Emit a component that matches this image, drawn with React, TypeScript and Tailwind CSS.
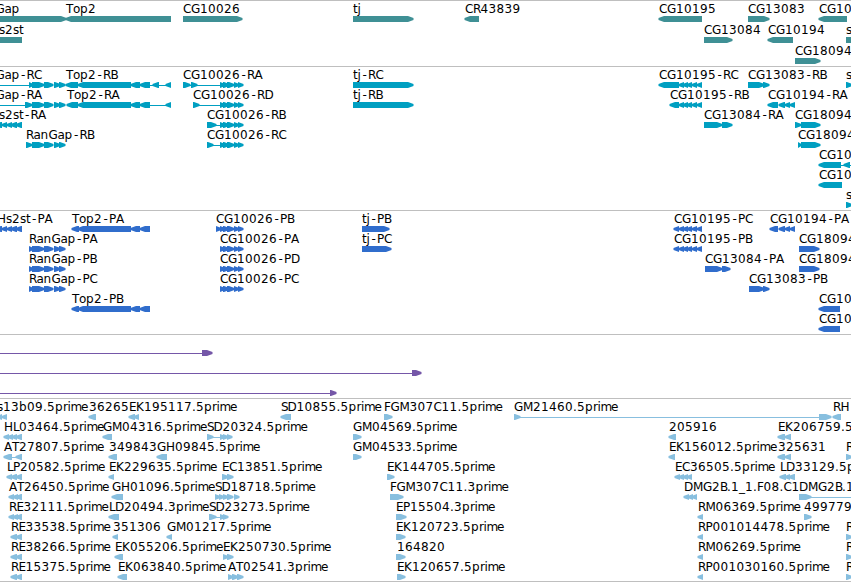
type Span = [number, number];

type Feature = {
  row: number;
  x: number;
  name?: string;
  dir: "L" | "R";
  parts: Span[];
  line?: Span;
};

type TrackData = {
  id: string;
  pitch: number;
  size: string;
  tone: string;
  features: Feature[];
};

// advance widths of the label font, in pixels
const ADVANCE: Record<string, number> = {
  A: 8, B: 7, C: 8, D: 9, E: 7, F: 6.5, G: 9, H: 9, K: 8, L: 6, M: 10, P: 7, R: 7.5, S: 6.5, T: 7,
  a: 7, b: 8, e: 7, i: 3, j: 3.5, m: 10.5, n: 8, o: 7, p: 8, r: 4.5, s: 6, t: 4.5,
  "-": 7, ".": 4, _: 6,
};

function f(row: number, x: number, name: string, dir: "L" | "R", parts: Span[], line?: Span): Feature {
  return { row, x, name, dir, parts, line };
}

const CG10026: Span[] = [[220, 225], [223, 229], [227, 234], [234, 239], [238, 243]];
const CG10195: Span[] = [[679, 684], [683, 688], [687, 692], [692, 697], [697, 702]];
const RANGAP: Span[] = [[32, 44], [44, 53], [54, 60], [59, 65]];
const TOP2: Span[] = [[78, 131], [131, 140], [140, 150]];
const HS2ST: Span[] = [[-4, 2], [2, 7], [7, 12], [11, 17], [16, 22]];

const TRACKS: TrackData[] = [
  {
    id: "genes",
    pitch: 21,
    size: "h-[66px]",
    tone: "text-[#3f9095]",
    features: [
      f(0, -27, "RanGap", "R", [[-27, 66]]),
      f(0, 66, "Top2", "L", [[66, 171]]),
      f(0, 183, "CG10026", "R", [[183, 242]]),
      f(0, 353, "tj", "R", [[353, 413]]),
      f(0, 465, "CR43839", "L", [[465, 479]]),
      f(0, 659, "CG10195", "L", [[659, 702]]),
      f(0, 748, "CG13083", "R", [[748, 769]]),
      f(0, 819, "CG10", "L", [[819, 847]]),
      f(1, -10, "Hs2st", "L", [[-10, 22]]),
      f(1, 704, "CG13084", "R", [[704, 732]]),
      f(1, 768, "CG10194", "L", [[768, 793]]),
      f(1, 846, "s", "R", [[846, 870]]),
      f(2, 795, "CG18094", "R", [[795, 820]]),
    ],
  },
  {
    id: "transcripts",
    pitch: 20,
    size: "h-[144px]",
    tone: "text-[#009fc1]",
    features: [
      f(0, -27, "RanGap-RC", "R", [[29, 33], ...RANGAP], [-27, 29]),
      f(0, 66, "Top2-RB", "L", [[66, 78], ...TOP2, [153, 159], [166, 171]], [150, 171]),
      f(0, 183, "CG10026-RA", "R", [[183, 190], [191, 197], ...CG10026], [183, 220]),
      f(0, 353, "tj-RC", "R", [[353, 413]]),
      f(0, 659, "CG10195-RC", "L", [[659, 679], ...CG10195]),
      f(0, 748, "CG13083-RB", "R", [[748, 764], [763, 769]]),
      f(0, 846, "s", "R", [[846, 852]]),
      f(1, -27, "RanGap-RA", "R", [[25, 32], ...RANGAP], [-27, 25]),
      f(1, 67, "Top2-RA", "L", [[67, 78], ...TOP2, [166, 171]], [150, 171]),
      f(1, 193, "CG10026-RD", "R", [[193, 199], ...CG10026], [193, 220]),
      f(1, 353, "tj-RB", "R", [[353, 413]]),
      f(1, 670, "CG10195-RB", "L", [[670, 679], ...CG10195]),
      f(1, 768, "CG10194-RA", "L", [[768, 778], [779, 785], [785, 790], [790, 795]]),
      f(2, -10, "Hs2st-RA", "L", HS2ST),
      f(2, 207, "CG10026-RB", "R", [[207, 216], ...CG10026], [207, 220]),
      f(2, 704, "CG13084-RA", "R", [[704, 722], [722, 732]]),
      f(2, 795, "CG18094", "R", [[795, 801], [801, 820]]),
      f(3, 26, "RanGap-RB", "R", [[26, 32], ...RANGAP]),
      f(3, 207, "CG10026-RC", "R", [[207, 213], ...CG10026], [207, 220]),
      f(3, 798, "CG18094", "R", [[798, 801], [801, 820]]),
      f(4, 819, "CG10", "L", [[819, 841], [844, 850]], [841, 851]),
      f(5, 819, "CG10", "L", [[819, 842]]),
      f(6, 846, "s", "R", [[846, 852]]),
    ],
  },
  {
    id: "proteins",
    pitch: 20,
    size: "h-[124px]",
    tone: "text-[#306dcc]",
    features: [
      f(0, -3, "Hs2st-PA", "L", HS2ST),
      f(0, 72, "Top2-PA", "L", [[72, 79], ...TOP2]),
      f(0, 216, "CG10026-PB", "R", [[216, 221], ...CG10026]),
      f(0, 362, "tj-PB", "R", [[362, 389]]),
      f(0, 674, "CG10195-PC", "L", [[674, 679], ...CG10195]),
      f(0, 770, "CG10194-PA", "L", [[770, 778], [779, 785], [785, 790], [790, 795]]),
      f(1, 29, "RanGap-PA", "R", [[29, 33], ...RANGAP]),
      f(1, 220, "CG10026-PA", "R", CG10026),
      f(1, 362, "tj-PC", "R", [[362, 391]]),
      f(1, 674, "CG10195-PB", "L", [[674, 679], ...CG10195]),
      f(1, 799, "CG18094", "R", [[799, 819]]),
      f(2, 29, "RanGap-PB", "R", [[29, 33], ...RANGAP]),
      f(2, 220, "CG10026-PD", "R", CG10026),
      f(2, 705, "CG13084-PA", "R", [[705, 722], [722, 730]]),
      f(2, 799, "CG18094", "R", [[799, 819]]),
      f(3, 29, "RanGap-PC", "R", [[29, 33], ...RANGAP]),
      f(3, 220, "CG10026-PC", "R", CG10026),
      f(3, 749, "CG13083-PB", "R", [[749, 764], [763, 769]]),
      f(4, 72, "Top2-PB", "L", [[72, 79], ...TOP2]),
      f(4, 819, "CG10", "L", [[819, 840]]),
      f(5, 819, "CG10", "L", [[819, 840]]),
    ],
  },
  {
    id: "insertions",
    pitch: 20,
    size: "h-16",
    tone: "text-[#7557a8]",
    features: [
      f(0, 0, "", "R", [[202, 212]], [0, 202]),
      f(1, 0, "", "R", [[412, 421]], [0, 412]),
      f(2, 0, "", "R", [[330, 336]], [0, 330]),
    ],
  },
  {
    id: "ests",
    pitch: 20,
    size: "h-[184px] border-b",
    tone: "text-[#88bfdf]",
    features: [
      f(0, -3, "s13b09.5prime", "L", [[-3, 2], [2, 7]]),
      f(0, 89, "36265", "L", [[89, 96]]),
      f(0, 129, "EK195117.5prime", "L", [[129, 135], [134, 139]]),
      f(0, 281, "SD10855.5prime", "L", [[281, 291]]),
      f(0, 384, "FGM307C11.5prime", "R", [[384, 392]]),
      f(0, 514, "GM21460.5prime", "R", [[514, 520], [819, 831]], [519, 819]),
      f(0, 833, "RH", "L", [[833, 841]]),
      f(1, 4, "HL03464.5prime", "L", [[4, 9], [8, 13], [12, 17], [16, 22]]),
      f(1, 103, "GM04316.5prime", "L", [[103, 112]]),
      f(1, 207, "SD20324.5prime", "R", [[207, 213], [220, 225], [223, 228], [227, 232]], [213, 220]),
      f(1, 353, "GM04569.5prime", "R", [[353, 361]]),
      f(1, 669, "205916", "L", [[669, 676]]),
      f(1, 778, "EK206759.5", "L", [[778, 785], [785, 791]]),
      f(2, 4, "AT27807.5prime", "L", [[4, 12], [16, 22]], [11, 18]),
      f(2, 109, "349843", "L", [[109, 117]]),
      f(2, 157, "GH09845.5prime", "L", [[157, 167]]),
      f(2, 353, "GM04533.5prime", "R", [[353, 361]]),
      f(2, 669, "EK156012.5prime", "L", [[669, 675]]),
      f(2, 778, "325631", "L", [[778, 785], [785, 791]]),
      f(2, 846, "R", "R", [[846, 852]]),
      f(3, 7, "LP20582.5prime", "L", [[7, 12], [11, 17], [16, 22]]),
      f(3, 109, "EK229635.5prime", "L", [[109, 114]]),
      f(3, 222, "EC13851.5prime", "R", [[222, 228], [227, 233]]),
      f(3, 387, "EK144705.5prime", "R", [[387, 394]]),
      f(3, 675, "EC36505.5prime", "L", [[675, 680], [679, 684], [683, 688], [687, 692]]),
      f(3, 780, "LD33129.5p", "L", [[780, 786], [785, 790], [789, 795]]),
      f(4, 9, "AT26450.5prime", "L", [[9, 14], [13, 18], [16, 22]]),
      f(4, 112, "GH01096.5prime", "L", [[112, 123]]),
      f(4, 215, "SD18718.5prime", "R", [[215, 220], [219, 224], [223, 228], [227, 233], [234, 239]]),
      f(4, 390, "FGM307C11.3prime", "R", [[390, 403]]),
      f(4, 684, "DMG2B.1_1.F08.C1", "L", [[684, 689], [688, 693], [692, 697]]),
      f(4, 799, "DMG2B.1", "R", [[799, 811]], [811, 851]),
      f(5, 9, "RE32111.5prime", "L", [[9, 14], [13, 18], [16, 22]]),
      f(5, 109, "LD20494.3prime", "L", [[109, 119]]),
      f(5, 209, "SD23273.5prime", "R", [[209, 216], [220, 225], [223, 228]], [215, 220]),
      f(5, 396, "EP15504.3prime", "R", [[396, 406]]),
      f(5, 698, "RM06369.5prime", "L", [[698, 703]]),
      f(5, 804, "499779", "R", [[804, 811]]),
      f(6, 11, "RE33538.5prime", "L", [[11, 17], [16, 22]]),
      f(6, 113, "351306", "L", [[113, 118]]),
      f(6, 167, "GM01217.5prime", "L", [[167, 172]]),
      f(6, 396, "EK120723.5prime", "R", [[396, 405]]),
      f(6, 698, "RP001014478.5prime", "L", [[698, 703]]),
      f(6, 846, "R", "R", [[846, 852]]),
      f(7, 11, "RE38266.5prime", "L", [[11, 17], [16, 22]]),
      f(7, 115, "EK055206.5prime", "L", [[115, 123]]),
      f(7, 223, "EK250730.5prime", "R", [[223, 228], [227, 233]]),
      f(7, 397, "164820", "R", [[396, 405]]),
      f(7, 698, "RM06269.5prime", "L", [[698, 703]]),
      f(7, 846, "R", "R", [[846, 852]]),
      f(8, 11, "RE15375.5prime", "L", [[11, 17], [16, 22]]),
      f(8, 118, "EK063840.5prime", "L", [[118, 127]]),
      f(8, 228, "AT02541.3prime", "R", [[228, 233], [232, 238], [237, 243]]),
      f(8, 397, "EK120657.5prime", "R", [[397, 405]]),
      f(8, 698, "RP001030160.5prime", "L", [[698, 703]]),
      f(8, 846, "R", "R", [[846, 852]]),
    ],
  },
];

function glyphPositions(name: string, start: number) {
  let x = start;
  return name
    .split("")
    .map((ch) => {
      // the hyphen is narrower than its cell, so centre it
      const at = ch === "-" ? x + 1.5 : x;
      x += ADVANCE[ch] ?? 8;
      return at;
    })
    .join(" ");
}

function arrow([x1, x2]: Span, dir: "L" | "R", y: number) {
  const head = Math.min(5, x2 - x1);
  if (dir === "R") {
    return `M${x1} ${y}H${x2 - head}L${x2 + 0.5} ${y + 2}V${y + 4}L${x2 - head} ${y + 6}H${x1}Z`;
  }
  return `M${x2} ${y}H${x1 + head}L${x1 - 0.5} ${y + 2}V${y + 4}L${x1 + head} ${y + 6}H${x2}Z`;
}

function Track({ track }: { track: TrackData }) {
  return (
    <section className={`w-full overflow-hidden border-t border-[#bfbfbf] ${track.size} ${track.tone}`}>
      <svg className="block h-full w-[851px]" fill="currentColor">
        {track.features.map(({ row, x, name, dir, parts, line }, i) => {
          const top = 15 + row * track.pitch;
          return (
            <g key={i}>
              {line && (
                <rect x={line[0]} y={top + 3} width={line[1] - line[0]} height={1} shapeRendering="crispEdges" />
              )}
              {parts.map((part) => (
                <path key={part[0]} d={arrow(part, dir, top)} />
              ))}
              {name && (
                <text x={glyphPositions(name, x)} y={top - 3} className="fill-black text-[12px]">
                  {name}
                </text>
              )}
            </g>
          );
        })}
      </svg>
    </section>
  );
}

export default function App() {
  return (
    <main className="flex h-[582px] w-[851px] flex-col overflow-hidden bg-white font-['DejaVu_Sans',sans-serif]">
      {TRACKS.map((track) => (
        <Track key={track.id} track={track} />
      ))}
    </main>
  );
}
